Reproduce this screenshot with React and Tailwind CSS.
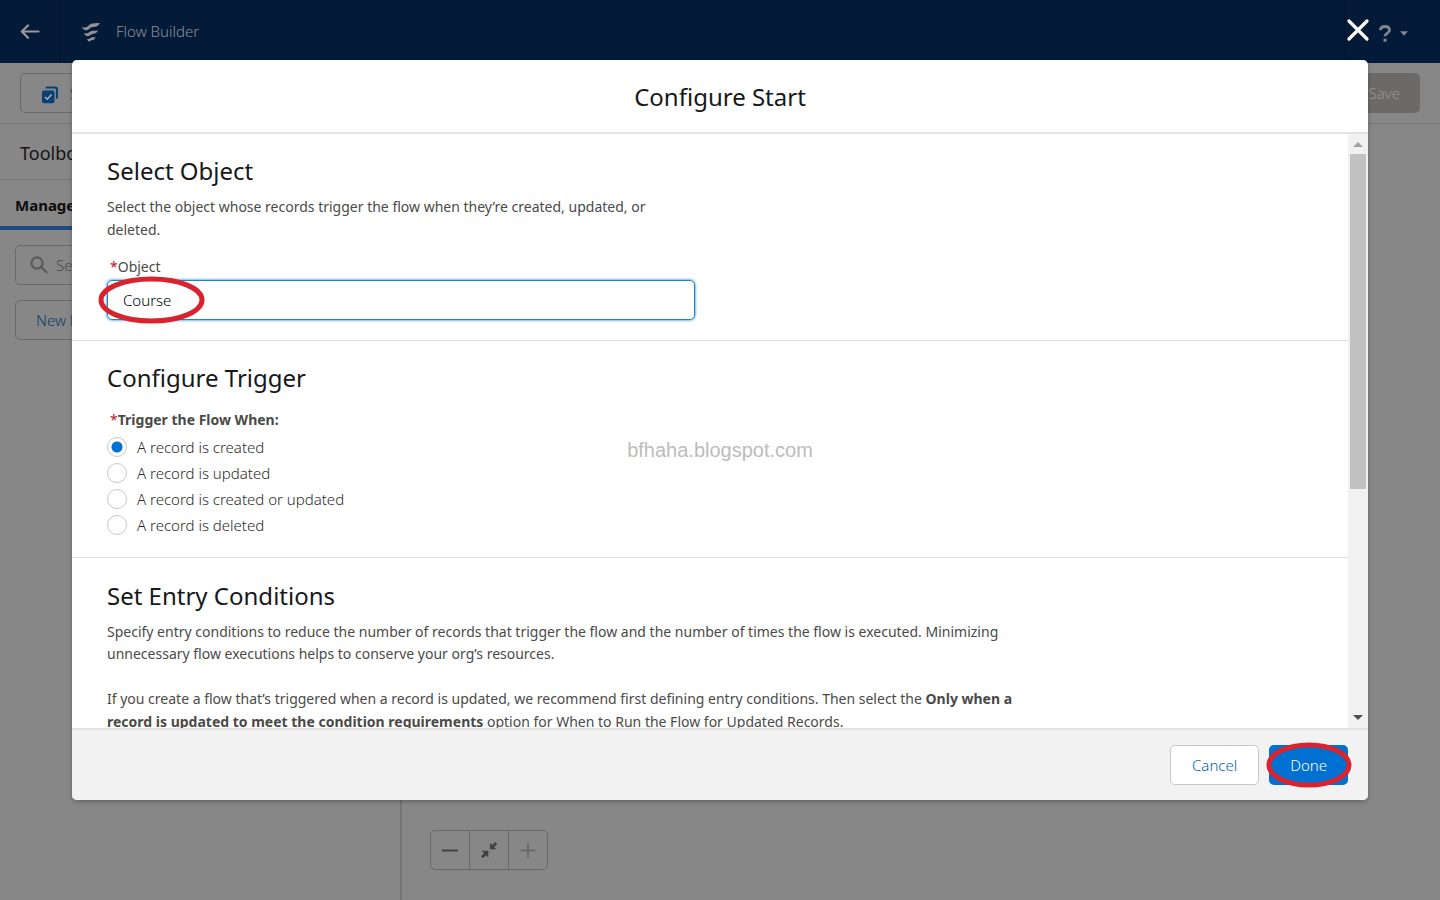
import React, { useState } from "react";

const FONT = "font-['Noto_Sans','Open_Sans',sans-serif]";

const TRIGGERS = [
  "A record is created",
  "A record is updated",
  "A record is created or updated",
  "A record is deleted",
];

function Ring({ className }) {
  return (
    <svg
      aria-hidden="true"
      className={"pointer-events-none absolute overflow-visible " + className}
      viewBox="0 0 100 100"
      preserveAspectRatio="none"
    >
      <ellipse cx="50" cy="50" rx="50" ry="50" fill="none" stroke="#d9232e" strokeWidth="5" vectorEffect="non-scaling-stroke" />
    </svg>
  );
}

function Header() {
  return (
    <header className="flex h-[63px] shrink-0 items-stretch bg-[#031a38] text-[#8e9299]">
      <button type="button" aria-label="Back" className="flex w-[61px] items-center justify-center border-r border-[#02122a]">
        <svg width="20" height="16" viewBox="0 0 20 16" fill="none" stroke="#9a9a9a" strokeWidth="2.200" strokeLinecap="round" strokeLinejoin="round">
          <path d="M18.500 7.500H2M8 1.500L1.800 7.500L8 13.800" />
        </svg>
      </button>
      <div className="flex grow items-center gap-[15px] pl-5">
        <svg width="20" height="20" viewBox="0 0 20 20" fill="#8f9195">
          <path d="M1 5C3.500 6 5.600 5.400 8 3.200C11 .4 14.500 1.400 18.800 1C17.600 4 15.300 5 12 4.900C8.800 4.800 8 8.400 4.600 8.200C2.800 8 1.600 6.800 1 5Z" />
          <path d="M3 11C5.200 11.800 6.800 11.300 8.800 9.800C11 8 13.400 8.900 17 8.600C15.900 11 14.200 11.900 12 11.900C9.400 12 8.600 14.300 6.300 14.200C4.700 14 3.600 12.700 3 11Z" />
          <path d="M6 16.800C7.800 17.300 8.500 16.600 9.900 15.700C11.400 14.900 12.600 15.500 14.600 15.300C13.800 17.400 12.600 18.100 11.200 18.100C9.800 18.100 9.400 19.600 8.200 19.500C7.200 19.300 6.400 18.200 6 16.800Z" />
        </svg>
        <span className="text-[15px] font-light">Flow Builder</span>
      </div>
      <button type="button" aria-label="Help" className="flex w-24 items-center gap-[9px] border-l border-[#02122a] pt-1 pl-[34px]">
        <svg width="12" height="17" viewBox="0 0 12 17" fill="none" stroke="#808691" strokeWidth="2.800">
          <path d="M1.400 5.200C1.600 2.800 3.400 1.500 5.900 1.500C8.700 1.500 10.500 3.100 10.500 5.300C10.500 8.300 6 8 6 11.300" />
          <path d="M4.500 15.200H7.500" strokeWidth="3" />
        </svg>
        <svg width="8" height="5" viewBox="0 0 8 5" fill="#808691"><path d="M0 0.300H8L4 4.800Z" /></svg>
      </button>
    </header>
  );
}

function Page() {
  return (
    <div className="flex h-full flex-col bg-[#878787]">
      <Header />
      <div className="flex h-[61px] shrink-0 items-center justify-between border-b border-[#757575] px-5">
        <button type="button" className="flex h-10 items-center gap-[11px] rounded-[5px] border border-[#6c6a69] px-5 text-[15px] font-light text-[#1c3f5f]">
          <svg className="mt-1" width="18" height="18" viewBox="0 0 18 18">
            <path d="M6 .6H14.500C16 .6 17 1.600 17 3V12.500H15V4C15 3 14.500 2.600 13.500 2.600H4.500V2C4.500 1.200 5.100 .6 6 .6Z" fill="#0a4073" />
            <rect x="1" y="4.500" width="12.500" height="12.800" rx="2" fill="#0a4073" />
            <path d="M4 11L6.300 13.200L10.500 8.600" fill="none" stroke="#a9b4bf" strokeWidth="1.500" />
          </svg>
          Select Elements
        </button>
        <button type="button" className="h-10 rounded-[5px] bg-[#6b6a69] px-5 text-[15px] font-light text-[#969696]">Save</button>
      </div>
      <div className="flex min-h-0 grow">
        <aside className="w-[402px] shrink-0 border-r-2 border-[#747474]">
          <h2 className="flex h-14 items-center border-b border-[#757575] px-5 pt-[3px] text-[18px] text-[#151515]">Toolbox</h2>
          <div className="flex h-[50px] items-center border-b-4 border-[#224a80] px-[15px] pt-[5px] text-[15px] font-bold text-[#0c0c0c]">Manager</div>
          <div className="flex flex-col items-start gap-[15px] p-[15px]">
            <label className="flex h-10 w-full items-center gap-2 rounded-[5px] border border-[#6c6a69] px-[14px]">
              <svg width="18" height="18" viewBox="0 0 18 18" fill="none" stroke="#5c5b5a" strokeWidth="2.200" strokeLinecap="round">
                <circle cx="7" cy="7" r="5.600" /><path d="M11.500 11.500L16.500 16.300" />
              </svg>
              <input type="search" aria-label="Search this flow" placeholder="Search this flow..." className="grow bg-transparent text-[15px] font-light placeholder:text-[#4a4949]" />
            </label>
            <button type="button" className="h-10 rounded-[5px] border border-[#6c6a69] px-5 text-[15px] font-light text-[#0c3d66]">New Resource</button>
          </div>
        </aside>
        <main className="flex grow items-end p-[30px] pl-7">
          <div className="flex h-10 divide-x divide-[#6c6a69] rounded-[5px] border border-[#6c6a69]">
            <button type="button" aria-label="Zoom out" className="flex w-[39px] items-center justify-center">
              <svg width="16" height="16" viewBox="0 0 16 16" stroke="#434241" strokeWidth="2"><path d="M0 8.500H16" /></svg>
            </button>
            <button type="button" aria-label="Zoom to fit" className="flex w-[39px] items-center justify-center">
              <svg width="16" height="16" viewBox="0 0 16 16" fill="#434241">
                <path d="M9 .8V7.300H15.500L13.200 5L16.200 2L14.200 0L11.200 3Z" />
                <path d="M7.300 15.500V8.800H.6L3 11.200L0 14.200L2 16.200L5 13.200Z" />
              </svg>
            </button>
            <button type="button" aria-label="Zoom in" disabled className="flex w-[38px] items-center justify-center">
              <svg width="16" height="16" viewBox="0 0 16 16" stroke="#6c6b6a" strokeWidth="2"><path d="M0.500 8.500H15.500M8 1V16" /></svg>
            </button>
          </div>
        </main>
      </div>
    </div>
  );
}

function SectionTitle({ children }) {
  return <h2 className="text-[24px] leading-[30px] font-normal text-[#181818]">{children}</h2>;
}

function Scrollbar() {
  return (
    <div aria-hidden="true" className="flex w-5 shrink-0 flex-col items-center bg-[#f1f1f1] pt-2 pb-2">
      <svg className="shrink-0" width="10" height="5" viewBox="0 0 10 5" fill="#a3a3a3"><path d="M0 5L5 0L10 5Z" /></svg>
      <div className="mt-[7px] h-[58%] w-4 shrink-0 bg-[#c1c1c1]" />
      <svg className="mt-auto shrink-0" width="10" height="5" viewBox="0 0 10 5" fill="#505050"><path d="M0 0L5 5L10 0Z" /></svg>
    </div>
  );
}

function Dialog() {
  const [trigger, setTrigger] = useState(TRIGGERS[0]);
  const [object, setObject] = useState("Course");
  return (
    <section role="dialog" aria-modal="true" aria-labelledby="dialog-title" className="relative flex h-full flex-col rounded-[5px] bg-white text-[14px] text-[#4a4a48] shadow-[0_2px_4px_rgba(0,0,0,0.25)]">
      <button type="button" aria-label="Close" className="absolute -top-[42px] -right-[2px]">
        <svg width="24" height="24" viewBox="0 0 24 24" stroke="#fff" strokeWidth="3.200" strokeLinecap="round"><path d="M3 3L21 21M21 3L3 21" /></svg>
      </button>
      <header className="flex h-[74px] shrink-0 items-center justify-center border-b-2 border-[#e4e3e2] pt-[2px]">
        <h1 id="dialog-title" className="text-[24px] leading-[30px] font-normal text-[#181818]">Configure Start</h1>
      </header>
      <div className="flex min-h-0 grow">
        <div className="grow overflow-hidden">
          <div className="border-b border-[#e0dfde] px-[35px] pt-[22px] pb-[20px]">
            <SectionTitle>Select Object</SectionTitle>
            <p className="mt-[9px] max-w-[588px] leading-[23px]">Select the object whose records trigger the flow when they’re created, updated, or deleted.</p>
            <label htmlFor="object" className="mt-4 block pl-[3px] leading-[20px]"><span className="text-[#b0182f]">*</span>Object</label>
            <div className="relative mt-[3px] max-w-[588px]">
              <input id="object" value={object} onChange={(e) => setObject(e.target.value)} className="block h-10 w-full rounded-[5px] border border-[#1589c8] px-[15px] text-[15px] font-light text-black shadow-[0_0_3px_#0070d2] outline-none" />
              <Ring className="-top-[1px] -left-[6px] h-[42px] w-[101px]" />
            </div>
          </div>
          <fieldset className="border-b border-[#e0dfde] px-[35px] pt-[22px] pb-[19px]">
            <SectionTitle>Configure Trigger</SectionTitle>
            <p className="mt-[17px] mb-[4px] pl-[3px] leading-[20px] font-bold"><span className="font-normal text-[#b0182f]">*</span>Trigger the Flow When:</p>
            {TRIGGERS.map((t) => (
              <label key={t} className="flex h-[26px] w-fit items-center gap-[10px] text-[15px] font-light text-[#2b2b2a]">
                <input type="radio" name="trigger" checked={trigger === t} onChange={() => setTrigger(t)} className="size-5 appearance-none rounded-full border border-[#cac8c6] bg-white checked:bg-[radial-gradient(circle,#0070d2_5px,transparent_6px)]" />
                {t}
              </label>
            ))}
          </fieldset>
          <div className="px-[35px] pt-[23px]">
            <SectionTitle>Set Entry Conditions</SectionTitle>
            <div className="mt-[10px] max-w-[920px] leading-[22px]">
              <p>Specify entry conditions to reduce the number of records that trigger the flow and the number of times the flow is executed. Minimizing unnecessary flow executions helps to conserve your org’s resources.</p>
              <p className="mt-[22px] leading-[23px]">If you create a flow that’s triggered when a record is updated, we recommend first defining entry conditions. Then select the <strong className="font-bold">Only when a record is updated to meet the condition requirements</strong> option for When to Run the Flow for Updated Records.</p>
            </div>
          </div>
        </div>
        <Scrollbar />
      </div>
      <footer className="flex h-[72px] shrink-0 items-center justify-end gap-[10px] rounded-b-[5px] border-t-2 border-[#e4e3e2] bg-[#f3f2f2] px-5">
        <button type="button" className="h-10 rounded-[5px] border border-[#cac8c6] bg-white px-[21px] text-[15px] font-light text-[#005fb2]">Cancel</button>
        <div className="relative">
          <button type="button" className="h-10 rounded-[5px] bg-[#0070d2] px-[21px] text-[15px] font-light text-white">Done</button>
          <Ring className="top-0 left-0 h-10 w-20" />
        </div>
      </footer>
    </section>
  );
}

export default function App() {
  return (
    <div className={"relative h-screen overflow-hidden " + FONT}>
      <Page />
      <div className="absolute inset-0 px-[5%] pt-[60px] pb-[100px]">
        <Dialog />
      </div>
      <div className="pointer-events-none absolute inset-0 flex items-center justify-center font-['Liberation_Sans',sans-serif] text-[20px] text-[#bcbcbc]">bfhaha.blogspot.com</div>
    </div>
  );
}
